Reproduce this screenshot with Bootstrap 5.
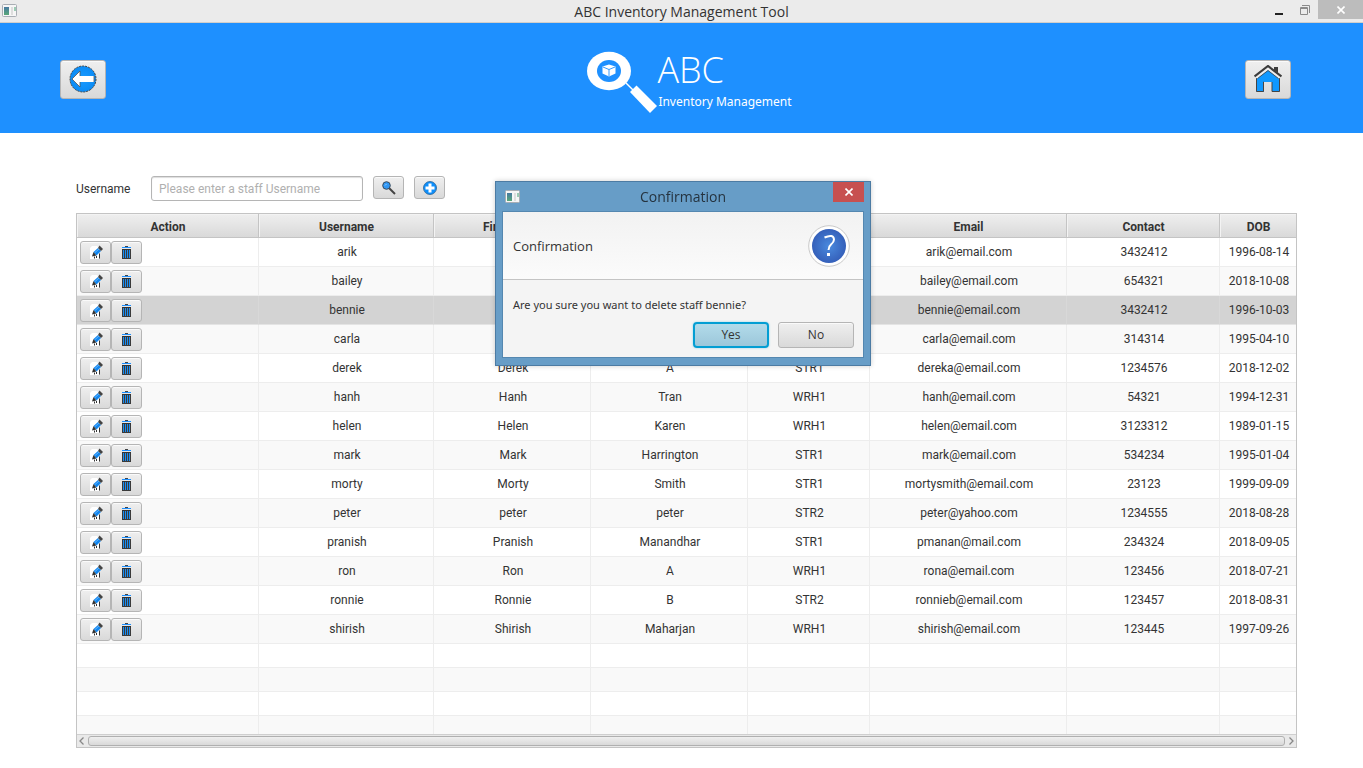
<!DOCTYPE html>
<html lang="en">
<head>
<meta charset="utf-8">
<meta name="viewport" content="width=device-width, initial-scale=1">
<title>ABC Inventory Management Tool</title>
<link href="https://cdn.jsdelivr.net/npm/bootstrap@5.3.0/dist/css/bootstrap.min.css" rel="stylesheet">
<style>
  body { font-family: Roboto, sans-serif; font-size: 12px; line-height: 16px; color: #333; background: #fff; }
  .segoe { font-family: "Open Sans", "Noto Sans", sans-serif; }
  .titlebar { height: 23px; background: #ebebeb; border-bottom: 1px solid #d2cfcb; display: grid; grid-template-columns: 1fr auto 1fr; }
  .titlebar h1 { font-size: 14px; line-height: 24px; color: #333; }
  .title-icon { margin: 4px 0 0 2px; }
  .win-btn { border: 0; padding: 0; background: none; display: flex; align-items: center; justify-content: center; }
  .win-min, .win-max { width: 26px; height: 19px; }
  .win-close { width: 45px; height: 19px; background: #bcbcbc; }
  .banner { background: #1e90ff; height: 110px; padding: 2px 72px 0 60px; display: grid; grid-template-columns: 1fr auto 1fr; align-items: center; }
  .brand { padding: 6px 0 0 27px; color: #fff; }
  .brand-name { font-size: 36px; line-height: 40px; font-weight: 300; }
  .brand-sub { font-family: "Noto Sans", sans-serif; font-size: 12px; line-height: 24px; margin-left: 1px; }
  .fx-btn { display: inline-flex; align-items: center; justify-content: center; vertical-align: top; padding: 0; color: #333; border: 1px solid #b5b5b5; border-radius: 3px; background: linear-gradient(#efefef, #d9d9d9); box-shadow: inset 0 1px 0 #fafafa; }
  .fx-big { width: 46px; height: 39px; }
  .fx-small { width: 31px; height: 23px; }
  .page-body { padding: 43px 66px 20px 76px; }
  .search-row { height: 25px; margin-bottom: 12px; }
  .search-label { width: 75px; line-height: 26px; }
  .search-box { width: 212px; height: 25px; padding: 0 7px; font-size: 12px; border: 1px solid #b5b5b5; border-radius: 3px; box-shadow: inset 0 1px 1px #ddd; }
  .search-box::placeholder { color: #b0b0b0; opacity: 1; }
  .search-row .fx-btn { margin-left: 10px; }
  .grid-frame { border: 1px solid #c4c4c4; }
  .staff { width: 100%; table-layout: fixed; border-collapse: separate; border-spacing: 0; text-align: center; }
  .staff th { height: 24px; padding: 2px 0 0 1px; line-height: 20px; font-weight: 700; border-right: 1px solid #c4c4c4; border-bottom: 1px solid #c4c4c4; background: linear-gradient(#efefef, #d9d9d9); box-shadow: inset 1px 1px 0 #f3f3f3; }
  .staff td { height: 29px; padding: 0 0 0 2px; border-right: 1px solid #ededed; border-bottom: 1px solid #ededed; vertical-align: middle; }
  .staff th:last-child, .staff td:last-child { border-right: 0; }
  .staff td:first-child { padding-left: 3px; text-align: left; font-size: 0; line-height: 0; }
  .staff tbody tr:nth-child(even) { background: #f9f9f9; }
  .staff tbody tr.picked { background: #d3d3d3; }
  .staff tbody tr.picked td { border-right-color: #d8d8d8; border-bottom-color: #e4e4e4; }
  .staff tr.blank td { height: 24px; }
  .staff tr.cut td { height: 18px; border-bottom: 0; }
  .hbar { height: 13px; border-top: 1px solid #cfcfcf; background: #e9e9e9; padding: 0 2px; }
  .hbar-thumb { height: 10px; margin: 0 4px; border: 1px solid #b0b0b0; border-radius: 3px; background: linear-gradient(#efefef, #d9d9d9); }
  .dlg-wrap { padding-left: 3px; pointer-events: none; }
  .dlg { width: 376px; margin: 181px auto 0; padding: 0 7px 7px; background: #679dc7; border: 1px solid #4c7ba3; box-shadow: 0 0 5px #0003; pointer-events: auto; }
  .dlg-title { height: 29px; }
  .dlg-title h2 { font-size: 14px; line-height: 30px; color: #25333f; }
  .dlg-icon { left: 2px; top: 8px; }
  .dlg-close { right: -1px; top: 0; width: 31px; height: 20px; background: #c75050; }
  .dlg-panel { margin: 0 -1px; border: 1px solid #5487b0; background: #f4f4f4; }
  .dlg-head { height: 68px; padding: 0 13px 0 10px; border-bottom: 1px solid #c4c4c4; background: linear-gradient(#f2f2f2, #fbfbfb); }
  .dlg-head p { font-size: 13px; }
  .dlg-msg { padding: 17px 10px 9px; line-height: 16px; font-family: "Noto Sans", sans-serif; font-size: 11px; }
  .dlg-actions { padding: 0 9px 9px; gap: 9px; }
  .dlg-btn { width: 76px; height: 26px; font-size: 12px; }
  .dlg-yes { border: 2px solid #039ed3; border-radius: 4px; background: linear-gradient(#b2dbea, #9cc7da); box-shadow: 0 0 2px #7fcce6; }
</style>
</head>
<body>
<svg width="0" height="0" class="position-absolute" aria-hidden="true">
  <defs>
    <radialGradient id="sky"><stop offset="0" stop-color="#1b9bff"/><stop offset="1" stop-color="#0a8bf5"/></radialGradient>
    <radialGradient id="deep"><stop offset="0" stop-color="#4a8ade"/><stop offset="1" stop-color="#3560ba"/></radialGradient>
    <linearGradient id="pane" x1="0" y1="0" x2="0" y2="1"><stop offset="0" stop-color="#4779a0"/><stop offset="1" stop-color="#58a878"/></linearGradient>
    <symbol id="i-app" viewBox="0 0 15 13">
      <rect x=".5" y=".5" width="14" height="12" rx="1" fill="#f6f6f6" stroke="#a9aeb4"/>
      <rect x="2" y="3" width="5" height="8" fill="url(#pane)"/><rect x="9" y="3" width="2" height="8" fill="#dedede"/><rect x="12" y="3" width="2" height="4" fill="#9ccbb4"/>
    </symbol>
    <symbol id="i-edit" viewBox="0 0 14 14">
      <path d="M3 1H8L10 3V14H1V3Z" fill="#fff"/>
      <path d="M4.500 7L9 3L12 6L7.500 10.500Z" fill="#1287f0"/>
      <path d="M9 3L10.500 .5L14 4L12 6Z" fill="#444"/>
      <path d="M4.500 7L3 11.500L7.500 10.500Z" fill="#333"/>
      <path d="M10.500 8.500V13.500M5.500 13.500V11.500M7.500 13V11" fill="none" stroke="#333" stroke-width="1"/>
      <path d="M6 7.500L10 4" stroke="#65b4fa" stroke-width="1"/>
    </symbol>
    <symbol id="i-bin" viewBox="0 0 11 13">
      <path d="M4 .5H7" stroke="#444"/><path d="M1 1.500H10" stroke="#1e90ff"/>
      <path d="M1 3.500H10" stroke="#333"/>
      <path d="M1 4H10V13H1Z" fill="#1a8df2"/>
      <path d="M1.500 4V13M3.500 4V13M5.500 4V13M7.500 4V13M9.500 4V13M1 12.500H10" stroke="#3a3a3a" fill="none"/>
    </symbol>
  </defs>
</svg>

<header class="titlebar segoe">
  <div><svg class="d-block title-icon" width="15" height="13" aria-hidden="true"><use href="#i-app"/></svg></div>
  <h1 class="m-0 fw-normal">ABC Inventory Management Tool</h1>
  <div class="d-flex justify-content-end">
    <button type="button" class="win-btn win-min" aria-label="Minimise"><svg width="8" height="12"><rect y="9" width="8" height="2" fill="#222"/></svg></button>
    <button type="button" class="win-btn win-max" aria-label="Restore"><svg width="10" height="10" fill="none" stroke="#8a8a8a"><path d="M2 .5H9.500V8"/><path d="M.5 2.500H7.500V9.500H.5Z"/><path d="M0 3.500H8"/></svg></button>
    <button type="button" class="win-btn win-close" aria-label="Close"><svg width="8" height="8" stroke="#fff" stroke-width="1.600"><path d="M.5 .5L7.500 7.500M7.500 .5L.5 7.500"/></svg></button>
  </div>
</header>

<div class="banner">
  <div>
    <button type="button" class="fx-btn fx-big" aria-label="Back">
      <svg width="28" height="28" viewBox="0 0 28 28"><circle cx="14" cy="14" r="13" fill="url(#sky)" stroke="#444" stroke-width="1" stroke-dasharray="2 1"/><path d="M3 14L11 6V11H25V17H11V22Z" fill="#fff"/><path d="M3 14L11 6V11M25 11V17M11 17V22L3 14" fill="none" stroke="#555" stroke-width=".8"/></svg>
    </button>
  </div>
  <div class="brand d-flex segoe">
    <svg width="71" height="64" viewBox="0 0 71 64" aria-hidden="true">
      <ellipse cx="23" cy="21" rx="22" ry="19.300" fill="#fff"/><ellipse cx="23" cy="21" rx="12" ry="11" fill="#1e90ff"/>
      <path d="M16.500 16.500L23 14.500L29.500 16.500V23.500L23 26.500L16.500 23.500Z" fill="#fff"/><path d="M17 17L23 19.500L29 17M23 19.500V26" fill="none" stroke="#1e90ff" stroke-width=".9"/>
      <path d="M40 33L48 41" stroke="#fff" stroke-width="1.500"/><path d="M50.500 35.500L71 56L64 63L44 42Z" fill="#fff"/>
    </svg>
    <div>
      <div class="brand-name">ABC</div>
      <div class="brand-sub">Inventory Management</div>
    </div>
  </div>
  <div class="text-end">
    <button type="button" class="fx-btn fx-big" aria-label="Home">
      <svg width="28" height="28" viewBox="0 0 28 28"><path d="M2.500 14L14 5L25.500 14V27H18V17H10V27H2.500Z" fill="#0f98ff"/><path d="M2.500 13V26.500H9.500V17H10M18 17V26.500H25.500V13" fill="none" stroke="#444"/><path d="M.5 11.500L14 1L27.500 11.500" fill="none" stroke="#3c3c3c" stroke-width="2.200"/><path d="M20 2H24V8L20 5Z" fill="#3c3c3c"/><path d="M2.500 13L14 4L25.500 13" fill="none" stroke="#eee" stroke-width="1.400"/><path d="M3.500 13.500L14 5.500L24.500 13.500" fill="none" stroke="#444" stroke-width=".8"/></svg>
    </button>
  </div>
</div>

<main class="page-body">
  <form class="search-row d-flex align-items-start">
    <label for="staff-search" class="search-label">Username</label>
    <input id="staff-search" type="text" class="search-box" placeholder="Please enter a staff Username">
    <button type="button" class="fx-btn fx-small" aria-label="Search">
      <svg width="14" height="14" viewBox="0 0 14 14"><path d="M7 7L13 13" stroke="#444" stroke-width="2"/><circle cx="4.500" cy="4.500" r="3.800" fill="#2f97f5" stroke="#3b4a5a" stroke-width="1"/><path d="M3 4.500L4.500 3" stroke="#9bd0ff"/></svg>
    </button>
    <button type="button" class="fx-btn fx-small" aria-label="Add">
      <svg width="14" height="14" viewBox="0 0 14 14"><circle cx="7" cy="7" r="6.500" fill="#0d8ffc" stroke="#2a6295" stroke-width=".8"/><path d="M7 2.500V11.500M2.500 7H11.500" stroke="#fff" stroke-width="3"/></svg>
    </button>
  </form>

  <div class="grid-frame">
    <table class="staff">
      <colgroup><col style="width:182px"><col style="width:175px"><col style="width:157px"><col style="width:157px"><col style="width:122px"><col style="width:197px"><col style="width:153px"><col style="width:76px"></colgroup>
      <thead><tr><th>Action</th><th>Username</th><th>First Name</th><th>Last Name</th><th>Location</th><th>Email</th><th>Contact</th><th>DOB</th></tr></thead>
      <tbody>
        <tr><td><button type="button" class="fx-btn fx-small" aria-label="Edit arik"><svg width="14" height="14"><use href="#i-edit"/></svg></button><button type="button" class="fx-btn fx-small" aria-label="Delete arik"><svg width="11" height="13"><use href="#i-bin"/></svg></button></td><td>arik</td><td></td><td></td><td></td><td>arik@email.com</td><td>3432412</td><td>1996-08-14</td></tr>
        <tr><td><button type="button" class="fx-btn fx-small" aria-label="Edit bailey"><svg width="14" height="14"><use href="#i-edit"/></svg></button><button type="button" class="fx-btn fx-small" aria-label="Delete bailey"><svg width="11" height="13"><use href="#i-bin"/></svg></button></td><td>bailey</td><td></td><td></td><td></td><td>bailey@email.com</td><td>654321</td><td>2018-10-08</td></tr>
        <tr class="picked"><td><button type="button" class="fx-btn fx-small" aria-label="Edit bennie"><svg width="14" height="14"><use href="#i-edit"/></svg></button><button type="button" class="fx-btn fx-small" aria-label="Delete bennie"><svg width="11" height="13"><use href="#i-bin"/></svg></button></td><td>bennie</td><td></td><td></td><td></td><td>bennie@email.com</td><td>3432412</td><td>1996-10-03</td></tr>
        <tr><td><button type="button" class="fx-btn fx-small" aria-label="Edit carla"><svg width="14" height="14"><use href="#i-edit"/></svg></button><button type="button" class="fx-btn fx-small" aria-label="Delete carla"><svg width="11" height="13"><use href="#i-bin"/></svg></button></td><td>carla</td><td></td><td></td><td></td><td>carla@email.com</td><td>314314</td><td>1995-04-10</td></tr>
        <tr><td><button type="button" class="fx-btn fx-small" aria-label="Edit derek"><svg width="14" height="14"><use href="#i-edit"/></svg></button><button type="button" class="fx-btn fx-small" aria-label="Delete derek"><svg width="11" height="13"><use href="#i-bin"/></svg></button></td><td>derek</td><td>Derek</td><td>A</td><td>STR1</td><td>dereka@email.com</td><td>1234576</td><td>2018-12-02</td></tr>
        <tr><td><button type="button" class="fx-btn fx-small" aria-label="Edit hanh"><svg width="14" height="14"><use href="#i-edit"/></svg></button><button type="button" class="fx-btn fx-small" aria-label="Delete hanh"><svg width="11" height="13"><use href="#i-bin"/></svg></button></td><td>hanh</td><td>Hanh</td><td>Tran</td><td>WRH1</td><td>hanh@email.com</td><td>54321</td><td>1994-12-31</td></tr>
        <tr><td><button type="button" class="fx-btn fx-small" aria-label="Edit helen"><svg width="14" height="14"><use href="#i-edit"/></svg></button><button type="button" class="fx-btn fx-small" aria-label="Delete helen"><svg width="11" height="13"><use href="#i-bin"/></svg></button></td><td>helen</td><td>Helen</td><td>Karen</td><td>WRH1</td><td>helen@email.com</td><td>3123312</td><td>1989-01-15</td></tr>
        <tr><td><button type="button" class="fx-btn fx-small" aria-label="Edit mark"><svg width="14" height="14"><use href="#i-edit"/></svg></button><button type="button" class="fx-btn fx-small" aria-label="Delete mark"><svg width="11" height="13"><use href="#i-bin"/></svg></button></td><td>mark</td><td>Mark</td><td>Harrington</td><td>STR1</td><td>mark@email.com</td><td>534234</td><td>1995-01-04</td></tr>
        <tr><td><button type="button" class="fx-btn fx-small" aria-label="Edit morty"><svg width="14" height="14"><use href="#i-edit"/></svg></button><button type="button" class="fx-btn fx-small" aria-label="Delete morty"><svg width="11" height="13"><use href="#i-bin"/></svg></button></td><td>morty</td><td>Morty</td><td>Smith</td><td>STR1</td><td>mortysmith@email.com</td><td>23123</td><td>1999-09-09</td></tr>
        <tr><td><button type="button" class="fx-btn fx-small" aria-label="Edit peter"><svg width="14" height="14"><use href="#i-edit"/></svg></button><button type="button" class="fx-btn fx-small" aria-label="Delete peter"><svg width="11" height="13"><use href="#i-bin"/></svg></button></td><td>peter</td><td>peter</td><td>peter</td><td>STR2</td><td>peter@yahoo.com</td><td>1234555</td><td>2018-08-28</td></tr>
        <tr><td><button type="button" class="fx-btn fx-small" aria-label="Edit pranish"><svg width="14" height="14"><use href="#i-edit"/></svg></button><button type="button" class="fx-btn fx-small" aria-label="Delete pranish"><svg width="11" height="13"><use href="#i-bin"/></svg></button></td><td>pranish</td><td>Pranish</td><td>Manandhar</td><td>STR1</td><td>pmanan@mail.com</td><td>234324</td><td>2018-09-05</td></tr>
        <tr><td><button type="button" class="fx-btn fx-small" aria-label="Edit ron"><svg width="14" height="14"><use href="#i-edit"/></svg></button><button type="button" class="fx-btn fx-small" aria-label="Delete ron"><svg width="11" height="13"><use href="#i-bin"/></svg></button></td><td>ron</td><td>Ron</td><td>A</td><td>WRH1</td><td>rona@email.com</td><td>123456</td><td>2018-07-21</td></tr>
        <tr><td><button type="button" class="fx-btn fx-small" aria-label="Edit ronnie"><svg width="14" height="14"><use href="#i-edit"/></svg></button><button type="button" class="fx-btn fx-small" aria-label="Delete ronnie"><svg width="11" height="13"><use href="#i-bin"/></svg></button></td><td>ronnie</td><td>Ronnie</td><td>B</td><td>STR2</td><td>ronnieb@email.com</td><td>123457</td><td>2018-08-31</td></tr>
        <tr><td><button type="button" class="fx-btn fx-small" aria-label="Edit shirish"><svg width="14" height="14"><use href="#i-edit"/></svg></button><button type="button" class="fx-btn fx-small" aria-label="Delete shirish"><svg width="11" height="13"><use href="#i-bin"/></svg></button></td><td>shirish</td><td>Shirish</td><td>Maharjan</td><td>WRH1</td><td>shirish@email.com</td><td>123445</td><td>1997-09-26</td></tr>
        <tr class="blank"><td></td><td></td><td></td><td></td><td></td><td></td><td></td><td></td></tr>
        <tr class="blank"><td></td><td></td><td></td><td></td><td></td><td></td><td></td><td></td></tr>
        <tr class="blank"><td></td><td></td><td></td><td></td><td></td><td></td><td></td><td></td></tr>
        <tr class="blank cut"><td></td><td></td><td></td><td></td><td></td><td></td><td></td><td></td></tr>
      </tbody>
    </table>
    <div class="hbar d-flex align-items-center">
      <svg width="5" height="8" fill="none" stroke="#888" stroke-width="1.300"><path d="M4.500 .5L1 4L4.500 7.500"/></svg>
      <div class="hbar-thumb flex-grow-1"></div>
      <svg width="5" height="8" fill="none" stroke="#888" stroke-width="1.300"><path d="M.5 .5L4 4L.5 7.500"/></svg>
    </div>
  </div>
</main>

<div class="modal d-block dlg-wrap segoe" role="dialog" aria-labelledby="dlg-name">
  <div class="dlg">
    <div class="dlg-title position-relative text-center">
      <svg class="position-absolute dlg-icon" width="15" height="13" aria-hidden="true"><use href="#i-app"/></svg>
      <h2 id="dlg-name" class="m-0 fw-normal">Confirmation</h2>
      <button type="button" class="win-btn dlg-close position-absolute" aria-label="Close dialog"><svg width="8" height="8" stroke="#fff" stroke-width="1.600"><path d="M.5 .5L7.500 7.500M7.500 .5L.5 7.500"/></svg></button>
    </div>
    <div class="dlg-panel">
      <div class="dlg-head d-flex align-items-center justify-content-between">
        <p class="m-0">Confirmation</p>
        <svg width="42" height="42" viewBox="0 0 42 42"><circle cx="21" cy="21" r="20.300" fill="#fff" stroke="#c9c9c9"/><circle cx="21" cy="21" r="17" fill="url(#deep)"/><path d="M16.500 12.500Q25.500 8.500 26 14.500Q26 17 23 19.500Q20.500 21.500 20.500 25" fill="none" stroke="#fff" stroke-width="2"/><rect x="19" y="28" width="3" height="3" fill="#fff"/></svg>
      </div>
      <p class="dlg-msg m-0">Are you sure you want to delete staff bennie?</p>
      <div class="dlg-actions d-flex justify-content-end">
        <button type="button" class="fx-btn dlg-btn dlg-yes">Yes</button>
        <button type="button" class="fx-btn dlg-btn">No</button>
      </div>
    </div>
  </div>
</div>
<script src="https://cdn.jsdelivr.net/npm/bootstrap@5.3.0/dist/js/bootstrap.bundle.min.js"></script>
</body>
</html>
